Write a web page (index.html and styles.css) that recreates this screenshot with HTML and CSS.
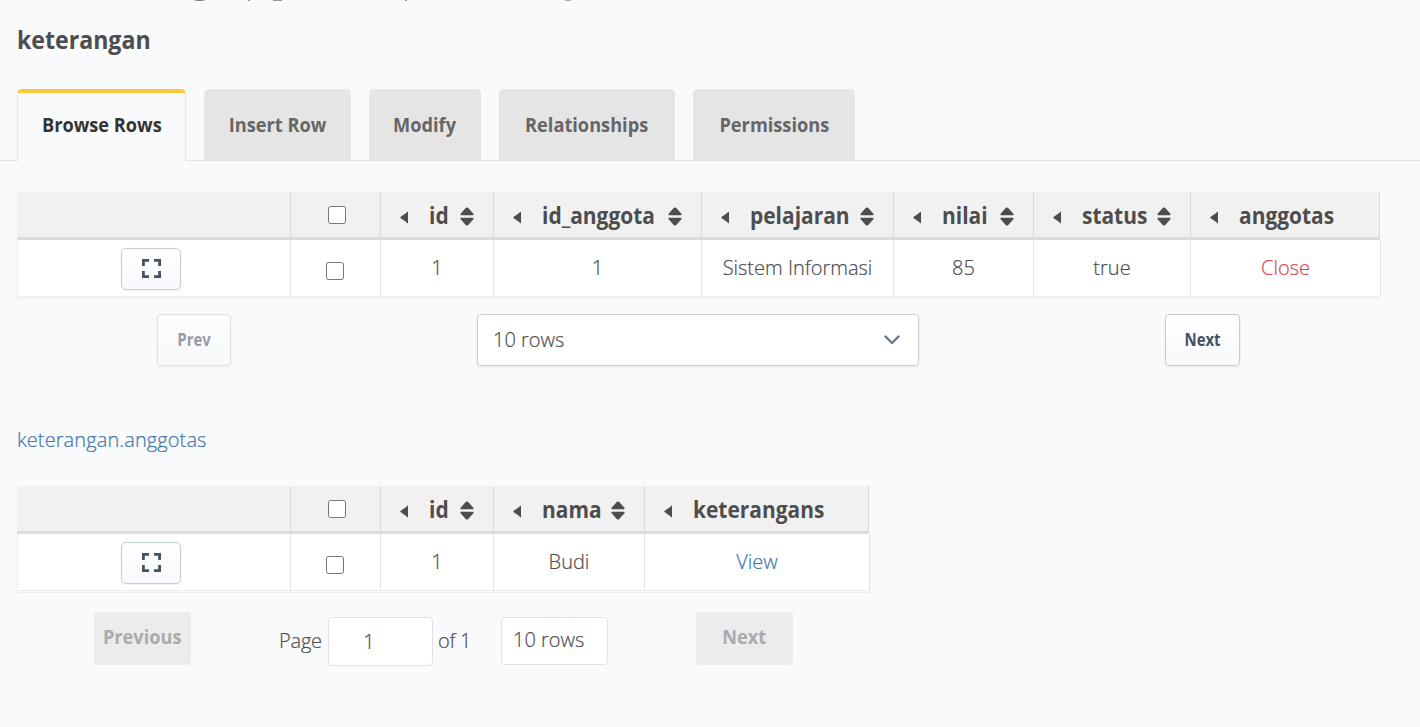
FILE: index.html
```html
<!DOCTYPE html>
<html lang="id">
<head>
<meta charset="utf-8">
<title>keterangan</title>
<link rel="stylesheet" href="styles.css">
</head>
<body>
<svg width="0" height="0" class="defs">
  <symbol id="left" viewBox="0 0 8 13"><path d="M8 .5v12Q7 12 5.500 10.500L.7 7.300Q0 6.500.7 5.700L5.500 2.500Q7 1 8 .5z"/></symbol>
  <symbol id="sort" viewBox="0 0 14 19"><path d="M1 8.200Q0 8 .6 6.800L6 .8Q7 0 8 .8l5.400 6Q14 8 13 8.200zM1 10.800h12q1 .2.4 1.400L8 18.200q-1 .8-2 0L.6 12.200Q0 11 1 10.800z"/></symbol>
  <symbol id="expand" viewBox="0 0 19 19"><path d="M0 7V0h7v2.800H2.800V7zM12 0h7v7h-2.800V2.800H12zM0 12h2.800v4.200H7V19H0zM16.200 12H19v7h-7v-2.800h4.200z"/></symbol>
</svg>
<div class="crumbs"><svg width="600" height="3" viewBox="0 0 600 3"><path d="M193 0h13q-6.500 2-13 0z"/><path d="M248 0h2v.8h-2zM273 0h9v.8h-9zM405 0h2v.8h-2zM564 0h8q-4 1.600-8 0z"/></svg></div>
<h1 class="title"><span>keterangan</span></h1>
<nav class="tabs">
  <a class="tab active t1"><span>Browse Rows</span></a>
  <a class="tab t2"><span>Insert Row</span></a>
  <a class="tab t3"><span>Modify</span></a>
  <a class="tab t4"><span>Relationships</span></a>
  <a class="tab t5"><span>Permissions</span></a>
</nav>
<main class="content">
  <section class="table main-table">
    <div class="row head">
      <div></div>
      <div><input type="checkbox"></div>
      <div class="col"><svg class="left"><use href="#left"/></svg><b>id</b><svg class="sort"><use href="#sort"/></svg></div>
      <div class="col"><svg class="left"><use href="#left"/></svg><b>id_anggota</b><svg class="sort"><use href="#sort"/></svg></div>
      <div class="col"><svg class="left"><use href="#left"/></svg><b>pelajaran</b><svg class="sort"><use href="#sort"/></svg></div>
      <div class="col"><svg class="left"><use href="#left"/></svg><b>nilai</b><svg class="sort"><use href="#sort"/></svg></div>
      <div class="col"><svg class="left"><use href="#left"/></svg><b>status</b><svg class="sort"><use href="#sort"/></svg></div>
      <div class="col"><svg class="left"><use href="#left"/></svg><b>anggotas</b></div>
    </div>
    <div class="row body">
      <div><button class="expand"><svg><use href="#expand"/></svg></button></div>
      <div><input type="checkbox"></div>
      <div>1</div><div>1</div><div>Sistem Informasi</div><div>85</div><div>true</div><div class="close">Close</div>
    </div>
  </section>
  <div class="pager">
    <button class="btn prev" disabled><span>Prev</span></button>
    <div class="select">10 rows<svg viewBox="0 0 16 10"><path d="M1.500 1.500 8 8l6.500-6.500"/></svg></div>
    <button class="btn next"><span>Next</span></button>
  </div>
  <a class="path">keterangan.anggotas</a>
  <section class="table sub-table">
    <div class="row head">
      <div></div>
      <div><input type="checkbox"></div>
      <div class="col"><svg class="left"><use href="#left"/></svg><b>id</b><svg class="sort"><use href="#sort"/></svg></div>
      <div class="col"><svg class="left"><use href="#left"/></svg><b>nama</b><svg class="sort"><use href="#sort"/></svg></div>
      <div class="col"><svg class="left"><use href="#left"/></svg><b>keterangans</b></div>
    </div>
    <div class="row body">
      <div><button class="expand"><svg><use href="#expand"/></svg></button></div>
      <div><input type="checkbox"></div>
      <div>1</div><div>Budi</div><div class="view">View</div>
    </div>
  </section>
  <div class="subpager">
    <button class="flat"><span>Previous</span></button>
    <div class="page"><span class="label">Page</span><span class="field">1</span><span class="of">of 1</span><span class="rows">10 rows</span></div>
    <button class="flat"><span>Next</span></button>
  </div>
</main>
</body>
</html>
```

FILE: styles.css
```css
* { box-sizing: border-box; }
body {
  margin: 0;
  height: 727px;
  overflow: hidden;
  background: #f9fafc;
  color: #4d4d4d;
  font: 300 20px/26px "Open Sans", "Noto Sans", sans-serif;
  -webkit-text-stroke: .2px;
}
.defs { display: block; height: 0; }
.crumbs { height: 8px; overflow: hidden; }
.crumbs svg { display: block; fill: #77787c; }
.title { margin: 0; padding: 13px 17px 0; height: 81px; font-size: 25px; line-height: 36px; font-weight: 700; }
.title span, .tab span, .btn span, .flat span { display: inline-block; transform: scaleX(.91); -webkit-text-stroke: 0; }
.title span { transform: scaleX(.925); transform-origin: left; }
.tabs { display: flex; gap: 18px; height: 72px; padding-left: 17px; border-bottom: 1px solid #e4e5e6; }
.tab {
  display: flex;
  justify-content: center;
  white-space: nowrap;
  height: 71px;
  padding-top: 23px;
  font-weight: 700;
  color: #666;
  background: #e5e5e5;
  border-radius: 5px 5px 0 0;
}
.tab.active {
  height: 72px;
  padding-top: 19px;
  color: #333;
  background: #f9fafc;
  border: 1px solid #e4e5e6;
  border-top: 4px solid #f8ca3c;
  border-bottom: 0;
}
.t1 { width: 169px; }
.t2 { width: 147px; }
.t3 { width: 112px; }
.t4 { width: 176px; }
.t5 { width: 162px; }
.content { padding: 31px 0 0 17px; }
.table { border-bottom: 1px solid #ebebed; height: 107px; }
.main-table { width: 1364px; }
.sub-table { width: 853px; }
.row { display: grid; }
.main-table .row { grid-template-columns: 274px 90px 113px 208px 192px 140px 157px 1fr; }
.sub-table .row { grid-template-columns: 274px 90px 113px 151px 1fr; }
.head { height: 48px; margin-right: 1px; background: #f1f1f1; border-bottom: 3px solid #dcdcdc; }
.head > div { display: flex; min-width: 0; border-right: 1px solid #d9d9d9; }
.head input { margin: 14px 0 0 37px; }
.body { height: 57px; background: #fff; border-bottom: 1px solid #ebebed; }
.body > div { border-right: 1px solid #e2e2e2; text-align: center; padding-top: 15px; }
.body > div:first-child { padding: 8px 6px 0 0; border-left: 1px solid #ebebed; }
.body input { margin: 7px 2px 0 0; }
input { width: 18px; height: 18px; }
.col { padding: 10px 19px 0 19px; }
.col b { font-size: 22.5px; line-height: 27px; margin-left: 21px; white-space: nowrap; font-weight: 700; transform: scaleX(.93); transform-origin: left; -webkit-text-stroke: 0; }
.left { width: 8px; height: 13px; margin-top: 9px; flex: none; fill: #4d4d4d; }
.sort { width: 14px; height: 19px; margin: 5px 0 0 auto; flex: none; fill: #4d4d4d; }
button { font: inherit; font-weight: 700; }
.expand { width: 60px; height: 42px; padding: 0; border: 1px solid #c4cbd9; border-radius: 5px; background: linear-gradient(#fff, #f7f9fc); box-shadow: 0 1px 2px #0001; }
.expand svg { display: block; width: 19px; height: 19px; margin: -1px auto 0; fill: #45525f; }
.pager { display: flex; padding: 15px 0 0 140px; }
.btn { height: 52px; padding: 0; border: 1px solid #c4cbd9; border-radius: 4px; background: linear-gradient(#fff, #f7f9fc); color: #425066; font-size: 17px; box-shadow: 0 1px 3px #00000014; }
.btn span { transform: scaleX(.88); }
.prev { width: 74px; opacity: .55; }
.next { width: 75px; }
.select { display: flex; align-items: center; justify-content: space-between; width: 442px; height: 52px; margin: 0 246px; padding: 0 18px 0 15px; border: 1px solid #c7cedb; border-radius: 4px; background: #fff; box-shadow: 0 1px 3px #00000014; }
.select svg { width: 16px; height: 10px; fill: none; stroke: #66788a; stroke-width: 2.400; stroke-linecap: round; stroke-linejoin: round; }
.path { display: block; margin: 61px 0 33px; color: #3d74ad; letter-spacing: .1px; }
.close { color: #d9484f; }
.view { color: #3d74ad; }
.subpager { display: flex; padding: 19px 0 0 77px; }
.flat { width: 97px; height: 53px; padding: 0 0 3px; border: 0; border-radius: 4px; background: #ebecee; color: #aaabac; }
.page { display: flex; width: 505px; padding: 5px 0 0 88px; }
.label { padding-top: 11px; width: 49px; letter-spacing: -.2px; }
.field { width: 105px; height: 49px; padding: 11px 23px 0 0; text-align: center; background: #fff; border: 1px solid #e0e2e4; border-radius: 4px; }
.of { width: 68px; padding: 11px 0 0 5px; letter-spacing: -.3px; }
.rows { width: 107px; height: 48px; padding: 9px 11px; background: #fff; border: 1px solid #e0e2e4; border-radius: 4px; }
```
